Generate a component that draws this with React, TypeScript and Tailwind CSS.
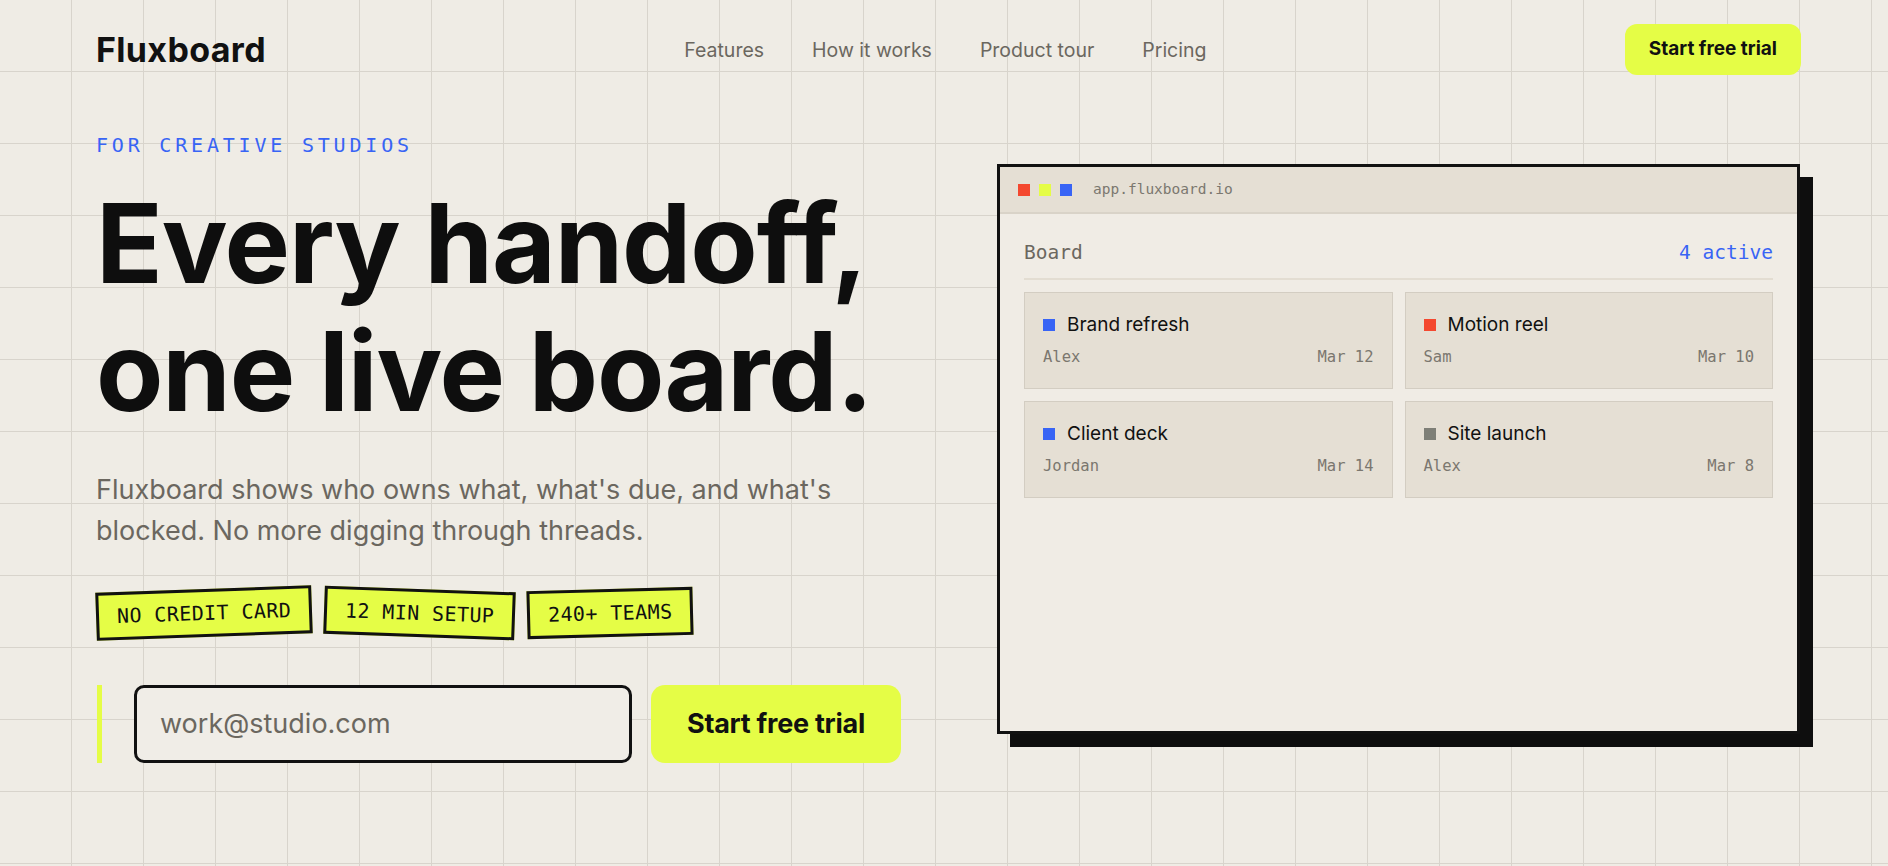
import React from "react";

const mono = "font-['DejaVu_Sans_Mono',monospace]";

const navLinks = ["Features", "How it works", "Product tour", "Pricing"];

const badges = [
    { label: "NO CREDIT CARD", tilt: "-rotate-2" },
    { label: "12 MIN SETUP", tilt: "rotate-2" },
    { label: "240+ TEAMS", tilt: "rotate-[-1.5deg]" },
];

const cards = [
    { title: "Brand refresh", owner: "Alex", due: "Mar 12", dot: "bg-[#3864f5]" },
    { title: "Motion reel", owner: "Sam", due: "Mar 10", dot: "bg-[#f4482f]" },
    { title: "Client deck", owner: "Jordan", due: "Mar 14", dot: "bg-[#3864f5]" },
    { title: "Site launch", owner: "Alex", due: "Mar 8", dot: "bg-[#7e7f77]" },
];

function Navbar() {
    return (
        <nav className="flex items-center justify-between h-[99px] pl-[96px] pr-[87px]">
            <span className="text-[34px] font-bold tracking-[0.01em] text-[#111]">Fluxboard</span>
            <div className="flex items-center gap-[48px] pt-[2px] text-[19.5px] text-[#6b675f]">
                {navLinks.map((l) => (
                    <a key={l} href="#" className="hover:text-[#111]">
                        {l}
                    </a>
                ))}
            </div>
            <button
                type="button"
                className="h-[51px] px-[24px] rounded-[12px] bg-[#e5fd46] text-[19px] font-bold text-[#111]"
            >
                Start free trial
            </button>
        </nav>
    );
}

function BoardWindow() {
    return (
        <div className="w-[803px] h-[570px] mt-[31px] border-[3px] border-[#111] bg-[#f0ece5] shadow-[13px_13px_0_#0e0e0e]">
            {/* title bar */}
            <div className="flex items-center h-[47px] px-[18px] bg-[#e5dfd4] border-b-2 border-[#d9d3c8]">
                <div className="flex gap-[9px]">
                    <span className="w-3 h-3 bg-[#f4482f]" />
                    <span className="w-3 h-3 bg-[#e5fd46]" />
                    <span className="w-3 h-3 bg-[#3864f5]" />
                </div>
                <span className={`${mono} ml-[21px] text-[14.5px] text-[#7b776f]`}>app.fluxboard.io</span>
            </div>
            {/* board */}
            <div className="px-6 pt-[27px]">
                <div className="flex items-center justify-between h-[24px]">
                    <span className={`${mono} text-[19.5px] text-[#6b675f]`}>Board</span>
                    <span className={`${mono} text-[19.5px] text-[#3864f5]`}>4 active</span>
                </div>
                <div className="mt-[13px] h-[2px] bg-[#e3ddd2]" />
                <div className="grid grid-cols-2 gap-3 mt-3">
                    {cards.map((c) => (
                        <div key={c.title} className="border border-[#d3cdc2] bg-[#e5dfd4] px-[18px] pt-[19px] pb-[20px]">
                            <div className="flex items-center gap-3 h-[26px]">
                                <span className={`w-3 h-3 ${c.dot}`} />
                                <span className="text-[19px] text-[#111]">{c.title}</span>
                            </div>
                            <div className={`${mono} flex justify-between mt-[10px] h-[20px] items-center text-[15.5px] text-[#7b776f]`}>
                                <span>{c.owner}</span>
                                <span>{c.due}</span>
                            </div>
                        </div>
                    ))}
                </div>
            </div>
        </div>
    );
}

export default function App() {
    return (
        <div className="min-h-screen w-full overflow-hidden bg-[#efece5] bg-[linear-gradient(to_right,#d8d4cc_1px,transparent_1px),linear-gradient(to_bottom,#d8d4cc_1px,transparent_1px)] bg-size-[72px_72px] bg-position-[-1px_-1px] font-['Inter',sans-serif]">
            <Navbar />
            {/* Hero */}
            <section className="flex pl-[96px] pr-[88px] pt-[34px] gap-[96px]">
                {/* Left */}
                <div className="w-[805px] shrink-0">
                    <p className={`${mono} text-[20px] leading-[24px] tracking-[0.19em] text-[#3864f5]`}>FOR CREATIVE STUDIOS</p>
                    <h1 className="mt-[22px] text-[110px] leading-[128px] font-bold tracking-[-0.01em] text-[#0e0e0e]">
                        Every handoff,
                        <br />
                        one live board.
                    </h1>
                    <p className="mt-[34px] max-w-[790px] text-[27px] leading-[41px] text-[#6b675f]">
                        Fluxboard shows who owns what, what's due, and what's blocked. No more digging through threads.
                    </p>
                    <div className="flex gap-3 mt-[38px]">
                        {badges.map((b) => (
                            <span
                                key={b.label}
                                className={`${mono} ${b.tilt} border-[3px] border-[#111] bg-[#e5fd46] px-[18px] py-[9px] text-[20px] leading-[24px] tracking-[0.02em] text-[#111]`}
                            >
                                {b.label}
                            </span>
                        ))}
                    </div>
                    <form className="flex h-[78px] mt-[48px]" onSubmit={(e) => e.preventDefault()}>
                        <span className="w-[5px] ml-px bg-[#e5fd46]" />
                        <input
                            type="email"
                            placeholder="work@studio.com"
                            className="ml-[32px] w-[498px] border-[3px] border-[#111] rounded-[10px] bg-[#f0ede7] px-[23px] text-[27px] text-[#111] placeholder:text-[#6b675f] outline-none"
                        />
                        <button
                            type="submit"
                            className="ml-[19px] w-[250px] rounded-[14px] bg-[#e5fd46] text-[27px] font-bold tracking-[-0.01em] text-[#111]"
                        >
                            Start free trial
                        </button>
                    </form>
                </div>
                {/* Right */}
                <BoardWindow />
            </section>
        </div>
    );
}
